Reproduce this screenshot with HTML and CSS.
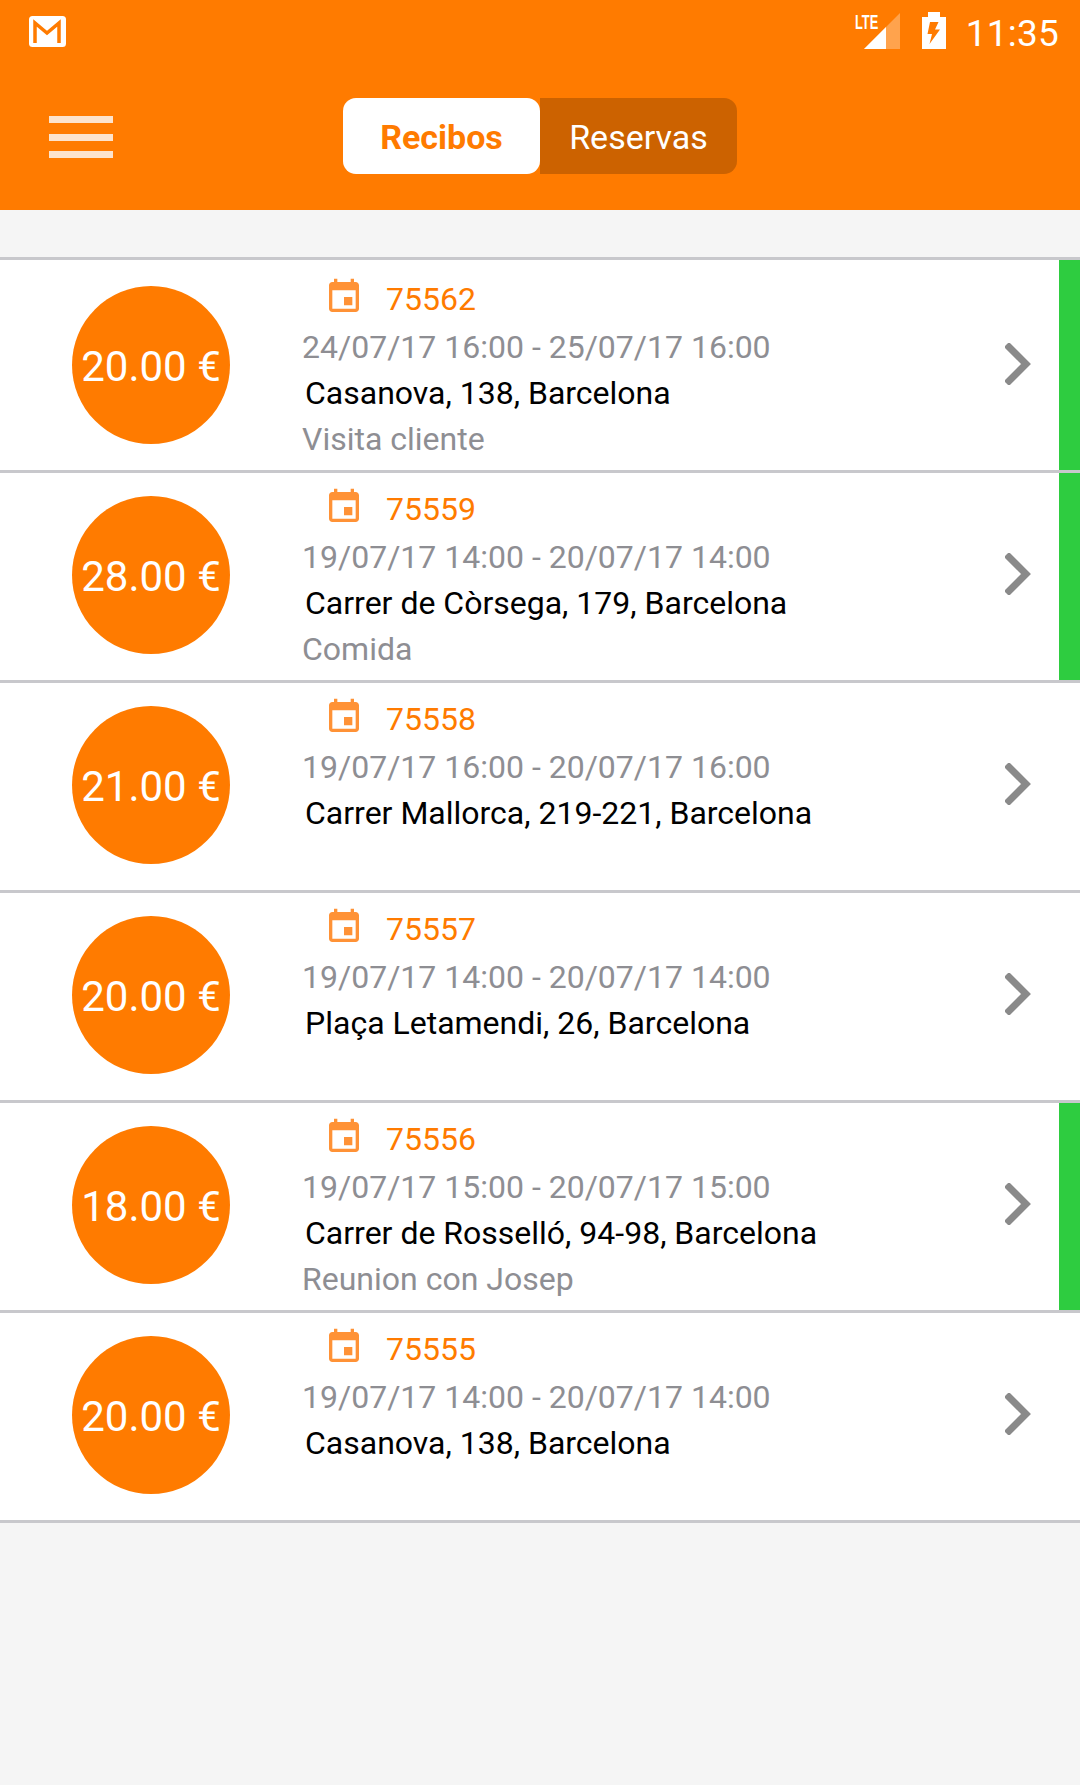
FILE: index.html
```html
<!DOCTYPE html>
<html lang="es">
<head>
    <meta charset="UTF-8">
    <meta name="viewport" content="width=device-width, initial-scale=1.0">
    <title>Recibos</title>
    <link rel="stylesheet" href="styles.css">
</head>
<body>
    <header class="top-bar">
        <div class="status-bar">
            <svg class="gmail-icon" viewBox="0 0 39 33" width="39" height="33">
                <rect x="1" y="1" width="37" height="31" rx="3.500" fill="#fff"/>
                <path d="M7 28V8l12 10L31 8v20" fill="none" stroke="#ff7b00" stroke-width="3.500"/>
            </svg>
            <div class="status-right">
                <svg class="signal-icon" viewBox="0 0 46 38" width="46" height="38">
                    <path d="M45 1v36H9z" fill="#fff" opacity="0.3"/>
                    <path d="M31 15v22H9z" fill="#fff"/>
                    <text x="0" y="17" class="lte-text">LTE</text>
                </svg>
                <svg class="battery-icon" viewBox="0 0 24 38" width="24" height="38">
                    <path d="M6 0h12v5h6v32H0V5h6z" fill="#fff"/>
                    <path d="M8 10h8.500L13 17.500h5L7.500 32 10 22H5.500z" fill="#ff7b00"/>
                </svg>
                <span class="clock">11:35</span>
            </div>
        </div>
        <nav class="nav-bar">
            <div class="menu-btn"><span></span><span></span><span></span></div>
            <div class="tabs">
                <div class="tab active">Recibos</div>
                <div class="tab">Reservas</div>
            </div>
        </nav>
    </header>

    <main class="receipt-list">
        <div class="receipt first">
            <div class="amount">20.00 €</div>
            <div class="info">
                <div class="ref"><svg class="cal-icon" viewBox="0 0 24 24"><path d="M17 12h-5v5h5v-5zM16 1v2H8V1H6v2H5c-1.110 0-1.990.9-1.990 2L3 19c0 1.100.89 2 2 2h14c1.100 0 2-.9 2-2V5c0-1.100-.9-2-2-2h-1V1h-2zm3 18H5V8h14v11z"/></svg>75562</div>
                <div class="dates">24/07/17 16:00 - 25/07/17 16:00</div>
                <div class="address">Casanova, 138, Barcelona</div>
                <div class="note">Visita cliente</div>
            </div>
            <svg class="chevron" viewBox="0 0 26 42"><path d="M4 4l17 17L4 38" /></svg>
            <div class="flag on"></div>
        </div>
        <div class="receipt">
            <div class="amount">28.00 €</div>
            <div class="info">
                <div class="ref"><svg class="cal-icon" viewBox="0 0 24 24"><path d="M17 12h-5v5h5v-5zM16 1v2H8V1H6v2H5c-1.110 0-1.990.9-1.990 2L3 19c0 1.100.89 2 2 2h14c1.100 0 2-.9 2-2V5c0-1.100-.9-2-2-2h-1V1h-2zm3 18H5V8h14v11z"/></svg>75559</div>
                <div class="dates">19/07/17 14:00 - 20/07/17 14:00</div>
                <div class="address">Carrer de Còrsega, 179, Barcelona</div>
                <div class="note">Comida</div>
            </div>
            <svg class="chevron" viewBox="0 0 26 42"><path d="M4 4l17 17L4 38" /></svg>
            <div class="flag on"></div>
        </div>
        <div class="receipt">
            <div class="amount">21.00 €</div>
            <div class="info">
                <div class="ref"><svg class="cal-icon" viewBox="0 0 24 24"><path d="M17 12h-5v5h5v-5zM16 1v2H8V1H6v2H5c-1.110 0-1.990.9-1.990 2L3 19c0 1.100.89 2 2 2h14c1.100 0 2-.9 2-2V5c0-1.100-.9-2-2-2h-1V1h-2zm3 18H5V8h14v11z"/></svg>75558</div>
                <div class="dates">19/07/17 16:00 - 20/07/17 16:00</div>
                <div class="address">Carrer Mallorca, 219-221, Barcelona</div>
            </div>
            <svg class="chevron" viewBox="0 0 26 42"><path d="M4 4l17 17L4 38" /></svg>
            <div class="flag"></div>
        </div>
        <div class="receipt">
            <div class="amount">20.00 €</div>
            <div class="info">
                <div class="ref"><svg class="cal-icon" viewBox="0 0 24 24"><path d="M17 12h-5v5h5v-5zM16 1v2H8V1H6v2H5c-1.110 0-1.990.9-1.990 2L3 19c0 1.100.89 2 2 2h14c1.100 0 2-.9 2-2V5c0-1.100-.9-2-2-2h-1V1h-2zm3 18H5V8h14v11z"/></svg>75557</div>
                <div class="dates">19/07/17 14:00 - 20/07/17 14:00</div>
                <div class="address">Plaça Letamendi, 26, Barcelona</div>
            </div>
            <svg class="chevron" viewBox="0 0 26 42"><path d="M4 4l17 17L4 38" /></svg>
            <div class="flag"></div>
        </div>
        <div class="receipt">
            <div class="amount">18.00 €</div>
            <div class="info">
                <div class="ref"><svg class="cal-icon" viewBox="0 0 24 24"><path d="M17 12h-5v5h5v-5zM16 1v2H8V1H6v2H5c-1.110 0-1.990.9-1.990 2L3 19c0 1.100.89 2 2 2h14c1.100 0 2-.9 2-2V5c0-1.100-.9-2-2-2h-1V1h-2zm3 18H5V8h14v11z"/></svg>75556</div>
                <div class="dates">19/07/17 15:00 - 20/07/17 15:00</div>
                <div class="address">Carrer de Rosselló, 94-98, Barcelona</div>
                <div class="note">Reunion con Josep</div>
            </div>
            <svg class="chevron" viewBox="0 0 26 42"><path d="M4 4l17 17L4 38" /></svg>
            <div class="flag on"></div>
        </div>
        <div class="receipt">
            <div class="amount">20.00 €</div>
            <div class="info">
                <div class="ref"><svg class="cal-icon" viewBox="0 0 24 24"><path d="M17 12h-5v5h5v-5zM16 1v2H8V1H6v2H5c-1.110 0-1.990.9-1.990 2L3 19c0 1.100.89 2 2 2h14c1.100 0 2-.9 2-2V5c0-1.100-.9-2-2-2h-1V1h-2zm3 18H5V8h14v11z"/></svg>75555</div>
                <div class="dates">19/07/17 14:00 - 20/07/17 14:00</div>
                <div class="address">Casanova, 138, Barcelona</div>
            </div>
            <svg class="chevron" viewBox="0 0 26 42"><path d="M4 4l17 17L4 38" /></svg>
            <div class="flag"></div>
        </div>
    </main>
</body>
</html>
```

FILE: styles.css
```css
html, body {
    margin: 0;
    height: 100%;
}
body {
    font-family: Roboto, sans-serif;
    background-color: #f5f5f5;
    overflow: hidden;
}
.top-bar {
    height: 210px;
    background-color: #ff7b00;
    color: white;
    box-sizing: border-box;
}
.status-bar {
    height: 98px;
    padding: 12px 21px 0 28px;
    box-sizing: border-box;
    display: flex;
    justify-content: space-between;
    align-items: flex-start;
}
.gmail-icon {
    margin-top: 3px;
}
.status-right {
    display: flex;
    align-items: flex-start;
}
.lte-text {
    font-family: "Liberation Sans", sans-serif;
    font-size: 20px;
    font-weight: bold;
    fill: white;
    transform: scaleX(0.64);
}
.battery-icon {
    margin-left: 21px;
}
.clock {
    font-size: 37px;
    line-height: 40px;
    margin-top: 2px;
    margin-left: 20px;
    letter-spacing: 0.2px;
}
.nav-bar {
    height: 76px;
    display: flex;
    align-items: center;
    padding-left: 49px;
}
.menu-btn {
    width: 64px;
    display: flex;
    flex-direction: column;
    gap: 10.500px;
    margin-top: 2px;
}
.menu-btn span {
    display: block;
    height: 7px;
    background-color: #fde3cc;
}
.tabs {
    display: flex;
    margin-left: 230px;
    width: 394px;
    height: 76px;
}
.tab {
    flex: 1;
    display: flex;
    align-items: center;
    justify-content: center;
    font-size: 34px;
    padding-top: 1px;
    box-sizing: border-box;
    background-color: #cc6200;
    border-radius: 0 13px 13px 0;
}
.tab.active {
    background-color: white;
    color: #ff7b00;
    font-weight: bold;
    border-radius: 13px;
}
.receipt-list {
    margin-top: 47px;
    border-top: 3px solid #c8c8cc;
}
.receipt {
    height: 207px;
    border-bottom: 3px solid #c8c8cc;
    background-color: white;
    display: flex;
    align-items: flex-start;
}
.receipt.first {
    height: 210px;
}
.amount {
    width: 158px;
    height: 158px;
    margin: 23px 0 0 72px;
    padding-top: 2px;
    box-sizing: border-box;
    border-radius: 50%;
    background-color: #ff7b00;
    color: white;
    font-size: 42px;
    display: flex;
    align-items: center;
    justify-content: center;
    flex-shrink: 0;
    white-space: nowrap;
}
.first .amount {
    margin-top: 26px;
}
.info {
    flex: 1;
    margin-left: 72px;
    font-size: 32px;
    padding-top: 11px;
}
.first .info {
    padding-top: 14px;
}
.ref {
    color: #ff7b00;
    height: 50px;
    line-height: 50px;
    display: flex;
    align-items: center;
    padding-left: 84px;
    position: relative;
}
.cal-icon {
    position: absolute;
    left: 22px;
    top: 3px;
    width: 40px;
    height: 40px;
    fill: #ff9236;
}
.dates {
    color: #8e8e93;
    height: 46px;
    line-height: 46px;
    margin-top: -0.500px;
}
.address {
    color: black;
    height: 46px;
    line-height: 46px;
    padding-left: 3px;
}
.note {
    color: #8e8e93;
    height: 46px;
    line-height: 46px;
}
.chevron {
    width: 26px;
    height: 42px;
    margin-top: 80px;
    margin-right: 28px;
    flex-shrink: 0;
    fill: none;
    stroke: #8a8a8a;
    stroke-width: 7;
    stroke-linecap: square;
}
.first .chevron {
    margin-top: 83px;
}
.flag {
    width: 21px;
    height: 100%;
    flex-shrink: 0;
}
.flag.on {
    background-color: #2ecc40;
}
```
